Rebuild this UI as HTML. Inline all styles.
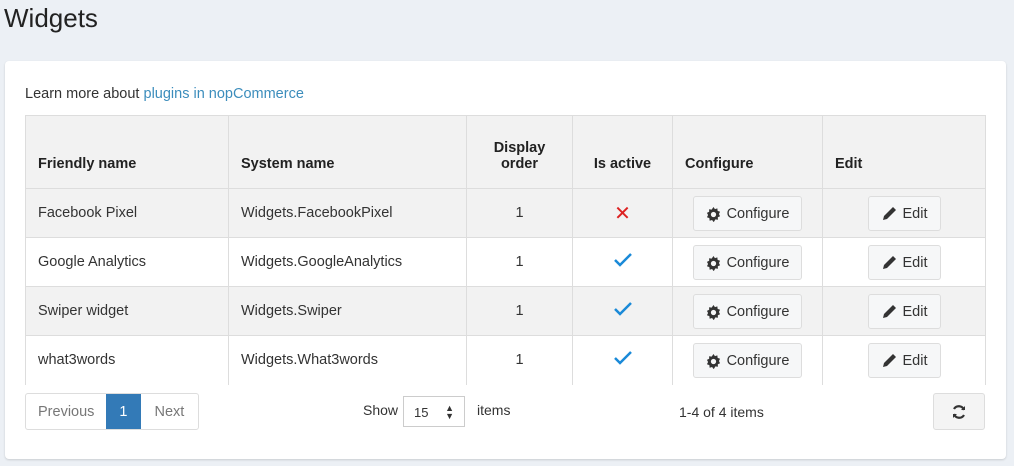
<!DOCTYPE html>
<html><head><style>
*{box-sizing:border-box;margin:0;padding:0}
body{width:1014px;height:466px;background:#ecf0f5;font-family:"Liberation Sans",sans-serif;font-size:14px;color:#333;position:relative;overflow:hidden}
h1{position:absolute;left:4px;top:3px;font-size:26px;font-weight:normal;color:#222}
.card{position:absolute;left:5px;top:61px;width:1001px;height:398px;background:#fff;border-radius:4px;box-shadow:0 1px 2px rgba(0,0,0,.15)}
.learn{position:absolute;left:25px;top:86px;font-size:14.5px}
.learn a{color:#3c8dbc;text-decoration:none}
table{position:absolute;left:25px;top:115px;border-collapse:collapse;width:961px}
th,td{border:1px solid #ddd;padding:0 12px;height:49px;font-size:14.5px}
th{height:73px;background:#f2f2f2;text-align:left;vertical-align:bottom;padding-bottom:16px;font-weight:bold;color:#222}
th.c,td.c{text-align:center}
tr.odd td{background:#f2f2f2}
tr:last-child td{border-bottom:none}
.btn{display:inline-flex;align-items:center;gap:6px;height:35px;line-height:35px;padding-top:2px;border:1px solid #ddd;border-radius:3px;background:#f6f7f8;padding-left:12px;padding-right:12px;color:#333;font-size:14.5px}
.pg{position:absolute;top:393px;height:37px;display:flex;border:1px solid #ddd;border-radius:3px;left:25px;overflow:hidden}
.pg span{display:flex;align-items:center;padding:0 12px;color:#777;font-size:14.5px}
.pg .on{background:#337ab7;color:#fff;padding:0 13px}
.abs{position:absolute}
</style></head><body>
<h1>Widgets</h1>
<div class="card"></div>
<div class="learn">Learn more about <a>plugins in nopCommerce</a></div>
<table>
<tr><th style="width:203px">Friendly name</th><th style="width:238px">System name</th><th class="c" style="width:106px">Display<br>order</th><th class="c" style="width:100px">Is active</th><th style="width:150px">Configure</th><th>Edit</th></tr>
<tr class="odd"><td>Facebook Pixel</td><td>Widgets.FacebookPixel</td><td class="c">1</td><td class="c"><span style="color:#dd2222;font-size:20px">✕</span></td><td class="c"><span class="btn"><svg width="15" height="15" viewBox="0 0 16 16"><path fill="#333" d="M8 0l1.5 2.2 2.6-.8.3 2.7 2.6 1-1.2 2.4L15 9.8l-2.4 1.1.1 2.7-2.7-.4L8.6 15.6 8 16 6.5 13.8l-2.6.8-.3-2.7L1 10.9l1.2-2.4L1 6.2l2.4-1.1L3.3 2.4 6 2.8z M8 5.2a2.8 2.8 0 100 5.6 2.8 2.8 0 000-5.6z"/></svg>Configure</span></td><td class="c"><span class="btn"><svg width="16" height="16" viewBox="0 0 16 16"><path fill="#333" d="M12 1l3 3-9 9-4 1 1-4z"/></svg>Edit</span></td></tr>
<tr><td>Google Analytics</td><td>Widgets.GoogleAnalytics</td><td class="c">1</td><td class="c"><svg width="18" height="14" viewBox="0 0 18 14"><path d="M1 7l5 5L17 1" stroke="#1a8ad8" stroke-width="2.5" fill="none"/></svg></td><td class="c"><span class="btn"><svg width="15" height="15" viewBox="0 0 16 16"><path fill="#333" d="M8 0l1.5 2.2 2.6-.8.3 2.7 2.6 1-1.2 2.4L15 9.8l-2.4 1.1.1 2.7-2.7-.4L8.6 15.6 8 16 6.5 13.8l-2.6.8-.3-2.7L1 10.9l1.2-2.4L1 6.2l2.4-1.1L3.3 2.4 6 2.8z M8 5.2a2.8 2.8 0 100 5.6 2.8 2.8 0 000-5.6z"/></svg>Configure</span></td><td class="c"><span class="btn"><svg width="16" height="16" viewBox="0 0 16 16"><path fill="#333" d="M12 1l3 3-9 9-4 1 1-4z"/></svg>Edit</span></td></tr>
<tr class="odd"><td>Swiper widget</td><td>Widgets.Swiper</td><td class="c">1</td><td class="c"><svg width="18" height="14" viewBox="0 0 18 14"><path d="M1 7l5 5L17 1" stroke="#1a8ad8" stroke-width="2.5" fill="none"/></svg></td><td class="c"><span class="btn"><svg width="15" height="15" viewBox="0 0 16 16"><path fill="#333" d="M8 0l1.5 2.2 2.6-.8.3 2.7 2.6 1-1.2 2.4L15 9.8l-2.4 1.1.1 2.7-2.7-.4L8.6 15.6 8 16 6.5 13.8l-2.6.8-.3-2.7L1 10.9l1.2-2.4L1 6.2l2.4-1.1L3.3 2.4 6 2.8z M8 5.2a2.8 2.8 0 100 5.6 2.8 2.8 0 000-5.6z"/></svg>Configure</span></td><td class="c"><span class="btn"><svg width="16" height="16" viewBox="0 0 16 16"><path fill="#333" d="M12 1l3 3-9 9-4 1 1-4z"/></svg>Edit</span></td></tr>
<tr><td>what3words</td><td>Widgets.What3words</td><td class="c">1</td><td class="c"><svg width="18" height="14" viewBox="0 0 18 14"><path d="M1 7l5 5L17 1" stroke="#1a8ad8" stroke-width="2.5" fill="none"/></svg></td><td class="c"><span class="btn"><svg width="15" height="15" viewBox="0 0 16 16"><path fill="#333" d="M8 0l1.5 2.2 2.6-.8.3 2.7 2.6 1-1.2 2.4L15 9.8l-2.4 1.1.1 2.7-2.7-.4L8.6 15.6 8 16 6.5 13.8l-2.6.8-.3-2.7L1 10.9l1.2-2.4L1 6.2l2.4-1.1L3.3 2.4 6 2.8z M8 5.2a2.8 2.8 0 100 5.6 2.8 2.8 0 000-5.6z"/></svg>Configure</span></td><td class="c"><span class="btn"><svg width="16" height="16" viewBox="0 0 16 16"><path fill="#333" d="M12 1l3 3-9 9-4 1 1-4z"/></svg>Edit</span></td></tr>
</table>
<div class="pg"><span>Previous</span><span class="on">1</span><span style="padding:0 14px">Next</span></div>
<div class="abs" style="left:363px;top:402px">Show</div>
<div class="abs" style="left:403px;top:396px;width:62px;height:31px;border:1px solid #ccc;padding:8px 10px;font-size:13px">15<span style="position:absolute;right:10px;top:7px;font-size:9px;line-height:8px">▲<br>▼</span></div>
<div class="abs" style="left:477px;top:402px">items</div>
<div class="abs" style="left:679px;top:404px">1-4 of 4 items</div>
<div class="abs" style="left:933px;top:393px;width:52px;height:37px;border:1px solid #ddd;border-radius:3px;background:#f4f4f4;display:flex;align-items:center;justify-content:center"><svg width="16" height="16" viewBox="0 0 16 16" fill="none" stroke="#333" stroke-width="2.2"><path d="M13 6A5.5 5.5 0 003 5M3 10a5.5 5.5 0 0010 1"/><path d="M14 2v4h-4z M2 14v-4h4z" fill="#333" stroke-width="0"/></svg></div>
</body></html>
